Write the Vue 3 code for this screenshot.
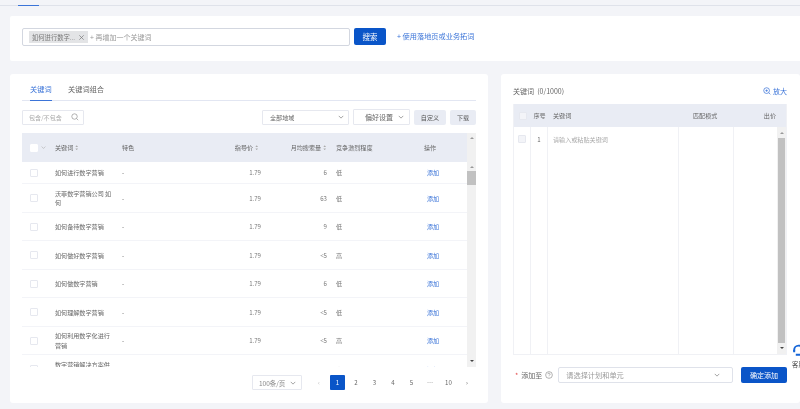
<script setup>
const rows = [
  { name: '如何进行数字营销', price: '1.79', volume: '6', level: '低' },
  { name: '沃菲数字营销公司 如何', price: '1.79', volume: '63', level: '低' },
  { name: '如何备待数字营销', price: '1.79', volume: '9', level: '低' },
  { name: '如何做好数字营销', price: '1.79', volume: '<5', level: '高' },
  { name: '如何做数字营销', price: '1.79', volume: '6', level: '低' },
  { name: '如何理解数字营销', price: '1.79', volume: '<5', level: '低' },
  { name: '如何利用数字化进行营销', price: '1.79', volume: '<5', level: '高' },
  { name: '数字营销解决方案供应商', price: '1.79', volume: '6', level: '高' }
]
const pages = ['2', '3', '4', '5', '⋯', '10']
</script>

<template>
  <div class="page">
    <div class="top">
      <div class="top__line"><span class="top__active"></span></div>
    </div>

    <section class="search">
      <div class="search__input">
        <span class="tag">如何进行数字... <svg class="tag__x" viewBox="0 0 8 8"><path d="M1.5 1.5l5 5M6.5 1.5l-5 5" /></svg></span>
        <span class="search__hint">+ 再增加一个关键词</span>
      </div>
      <button class="btn btn--primary search__btn">搜索</button>
      <a class="search__link">+ 使用落地页或业务拓词</a>
    </section>

    <div class="main">
      <section class="card left">
        <div class="tabs">
          <span class="tab tab--active">关键词</span>
          <span class="tab">关键词组合</span>
        </div>

        <div class="filters">
          <div class="field field--search">
            <span>包含/不包含</span>
            <svg class="icon-search" viewBox="0 0 10 10"><circle cx="4.4" cy="4.4" r="3.4" /><path d="M7 7l2 2" /></svg>
          </div>
          <div class="field field--region">
            <span>全部地域</span>
            <svg class="chev" viewBox="0 0 8 8"><path d="M1 2.5l3 3 3-3" /></svg>
          </div>
          <div class="field field--pref">
            <span>偏好设置</span>
            <svg class="chev" viewBox="0 0 8 8"><path d="M1 2.5l3 3 3-3" /></svg>
          </div>
          <button class="btn btn--grey btn--custom">自定义</button>
          <button class="btn btn--grey btn--down">下载</button>
        </div>

        <div class="table">
          <div class="table__main">
            <div class="grid grid--head">
              <span class="cell cell--check">
                <i class="check check--head"></i>
                <svg class="chev chev--small" viewBox="0 0 8 8"><path d="M1 2.5l3 3 3-3" /></svg>
              </span>
              <span class="cell">关键词 <svg class="sort" viewBox="0 0 5 8"><path d="M2.5 0.5L4.5 3h-4zM2.5 7.5L.5 5h4z" /></svg></span>
              <span class="cell">特色</span>
              <span class="cell cell--right cell--price">指导价 <svg class="sort" viewBox="0 0 5 8"><path d="M2.5 0.5L4.5 3h-4zM2.5 7.5L.5 5h4z" /></svg></span>
              <span class="cell cell--right cell--volume">月均搜索量 <svg class="sort" viewBox="0 0 5 8"><path d="M2.5 0.5L4.5 3h-4zM2.5 7.5L.5 5h4z" /></svg></span>
              <span class="cell cell--level">竞争激烈程度</span>
              <span class="cell">操作</span>
            </div>
            <div class="table__body">
              <div v-for="row in rows" :key="row.name" class="grid grid--row">
                <span class="cell cell--check"><i class="check"></i></span>
                <span class="cell cell--name">{{ row.name }}</span>
                <span class="cell">-</span>
                <span class="cell cell--right">{{ row.price }}</span>
                <span class="cell cell--right">{{ row.volume }}</span>
                <span class="cell cell--level">{{ row.level }}</span>
                <span class="cell cell--add">添加</span>
              </div>
            </div>
          </div>
          <div class="rail rail--left">
            <i class="arrow arrow--up"></i>
            <i class="arrow arrow--up rail__second"></i>
            <i class="thumb thumb--left"></i>
            <i class="arrow arrow--down rail__end"></i>
          </div>
        </div>

        <div class="pager">
          <div class="field field--size">
            <span>100条/页</span>
            <svg class="chev" viewBox="0 0 8 8"><path d="M1 2.5l3 3 3-3" /></svg>
          </div>
          <div class="pager__list">
            <span class="pager__item pager__item--off">‹</span>
            <span class="pager__item pager__item--on">1</span>
            <span v-for="p in pages" :key="p" class="pager__item">{{ p }}</span>
            <span class="pager__item">›</span>
          </div>
        </div>
      </section>

      <section class="card right">
        <div class="right__title">
          <span>关键词 &nbsp;(0/1000)</span>
          <a class="zoom">
            <svg viewBox="0 0 10 10"><circle cx="4.5" cy="4.5" r="3.6" /><path d="M7.2 7.2l2 2M3 4.5h3M4.5 3v3" /></svg>
            放大
          </a>
        </div>

        <div class="sheet">
          <div class="sheet__head">
            <span class="sheet__c1"><i class="check check--faint"></i></span>
            <span class="sheet__c2">序号</span>
            <span class="sheet__c3">关键词</span>
            <span class="sheet__c4">匹配模式</span>
            <span class="sheet__c5">出价</span>
          </div>
          <div class="sheet__body">
            <div class="sheet__cols">
              <span class="sheet__c1 sheet__cell"><i class="check check--faint"></i></span>
              <span class="sheet__c2 sheet__cell">1</span>
              <span class="sheet__c3 sheet__cell sheet__hint">请输入或粘贴关键词</span>
              <span class="sheet__c4 sheet__cell"></span>
              <span class="sheet__c5 sheet__cell sheet__cell--last"></span>
            </div>
            <div class="rail rail--right">
              <i class="arrow arrow--up"></i>
              <i class="thumb thumb--right"></i>
              <i class="arrow arrow--down"></i>
            </div>
          </div>
        </div>

        <div class="add">
          <span class="add__star">*</span>
          <span class="add__label">添加至</span>
          <svg class="add__help" viewBox="0 0 10 10"><circle cx="5" cy="5" r="4.2" /><path d="M3.7 4a1.3 1.3 0 1 1 2 1.1c-.5.3-.7.5-.7 1" /><path d="M5 7.2v.5" /></svg>
          <div class="field field--plan">
            <span>请选择计划和单元</span>
            <svg class="chev" viewBox="0 0 8 8"><path d="M1 2.5l3 3 3-3" /></svg>
          </div>
          <button class="btn btn--primary add__btn">确定添加</button>
        </div>
      </section>
    </div>

    <aside class="service">
      <svg viewBox="0 0 12 12"><path d="M2 7V5.5a4 4 0 0 1 8 0V7" /><path d="M2 5.5v2.2M10 5.5v2.2M3.5 10h4" /></svg>
      <span>客服</span>
    </aside>
  </div>
</template>

<style>
html,
body {
  margin: 0;
  background: #f3f4f8;
  overflow: hidden;
}
</style>

<style scoped>
.page {
  position: relative;
  width: 800px;
  height: 409px;
  overflow: hidden;
  background: #f3f4f8;
  font-family: "Noto Sans CJK SC", "Liberation Sans", sans-serif;
  font-size: 6.1px;
  color: #666;
  filter: blur(0.45px);
}

.page * {
  box-sizing: border-box;
}

.top {
  height: 16px;
  padding-top: 5px;
}

.top__line {
  height: 1px;
  background: #dfe2ea;
}

.top__active {
  display: block;
  width: 21px;
  height: 1px;
  margin-left: 18px;
  background: #3b74d8;
}

.search {
  display: flex;
  align-items: flex-start;
  height: 45px;
  margin-left: 10px;
  padding: 12px 0 0 12px;
  background: #fff;
  border-radius: 2px 0 0 2px;
}

.search__input {
  display: flex;
  align-items: center;
  width: 328px;
  height: 18px;
  padding-left: 6px;
  border: 1px solid #d3d7e0;
  border-radius: 2px;
}

.tag {
  display: flex;
  align-items: center;
  height: 12px;
  padding: 0 3px;
  background: #e3e4e6;
  font-size: 6.3px;
  color: #777;
}

.tag__x {
  width: 7px;
  height: 7px;
  margin-left: 3px;
  fill: none;
  stroke: #777;
  stroke-width: 0.8;
}

.search__hint {
  margin-left: 2px;
  font-size: 7px;
  color: #999;
}

.search__btn {
  width: 32px;
  height: 17px;
  margin-left: 4px;
  font-size: 7.5px;
}

.search__link {
  margin: 2px 0 0 11px;
  font-size: 7.2px;
  line-height: 12px;
  color: #3b74d8;
}

.btn {
  padding: 0;
  border: none;
  border-radius: 2px;
  font-family: inherit;
}

.btn--primary {
  background: #0a55c8;
  color: #fff;
}

.btn--grey {
  height: 15px;
  background: #e9ecf4;
  font-size: 6.1px;
  color: #555;
}

.btn--custom {
  width: 32px;
  margin-left: 4px;
}

.btn--down {
  width: 26px;
  margin-left: 4px;
}

.main {
  display: flex;
  gap: 13px;
  height: 329px;
  margin: 13px 0 0 10px;
}

.card {
  background: #fff;
  border-radius: 3px;
}

.left {
  width: 478px;
  padding: 0 12px;
}

.tabs {
  display: flex;
  gap: 16.5px;
  height: 27px;
  padding-left: 8px;
  border-bottom: 1px solid #e2e6f2;
}

.tab {
  height: 27px;
  font-size: 7.2px;
  line-height: 30px;
  color: #666;
}

.tab--active {
  border-bottom: 1px solid #3b74d8;
  color: #3b74d8;
}

.filters {
  display: flex;
  align-items: center;
  height: 16px;
  margin-top: 8px;
}

.field {
  display: flex;
  align-items: center;
  justify-content: space-between;
  height: 15px;
  background: #fff;
  border: 1px solid #e6e8ef;
  border-radius: 1px;
  color: #888;
}

.field--search {
  width: 62px;
  padding: 0 4px 0 6px;
  color: #aaa;
}

.icon-search {
  width: 8px;
  height: 8px;
  fill: none;
  stroke: #888;
  stroke-width: 0.8;
}

.chev {
  width: 6px;
  height: 6px;
  fill: none;
  stroke: #777;
  stroke-width: 0.9;
}

.field--region {
  width: 87px;
  margin-left: auto;
  padding: 0 4px 0 7px;
  color: #666;
}

.field--pref {
  width: 57px;
  height: 16px;
  margin-left: 4px;
  padding: 0 5px 0 11px;
  font-size: 7px;
  color: #666;
}

.table {
  display: flex;
  height: 234px;
  margin-top: 8px;
}

.table__main {
  width: 445px;
  overflow: hidden;
}

.grid {
  display: grid;
  grid-template-columns: 33px 67px 58px 81px 66px 97px 1fr;
  align-items: center;
}

.grid--head {
  height: 29px;
  background: #e9ecf4;
  color: #666;
}

.grid--row {
  height: 28.5px;
  padding-top: 1px;
  border-bottom: 1px solid #f3f4f8;
  color: #777;
}

.grid--row:first-child {
  height: 22px;
}

.cell {
  display: block;
  line-height: 9.5px;
  white-space: nowrap;
}

.cell--right {
  text-align: right;
}

.cell--price {
  padding-right: 3px;
}

.cell--volume {
  padding-right: 1px;
}

.cell--level {
  padding-left: 9px;
}

.cell--name {
  width: 58px;
  white-space: normal;
  color: #666;
}

.cell--check {
  display: flex;
  align-items: center;
  padding-left: 8px;
}

.cell--add {
  padding-left: 3px;
  color: #3b74d8;
}

.check {
  display: block;
  width: 8px;
  height: 8px;
  background: #fff;
  border: 1px solid #e6e8ef;
  border-radius: 1px;
}

.check--head {
  border-color: #fff;
}

.check--faint {
  background: #f3f4f8;
  border-color: #e6e8ef;
}

.chev--small {
  width: 5px;
  height: 5px;
  margin-left: 3px;
  stroke: #aaa;
}

.sort {
  width: 3.5px;
  height: 5.5px;
  vertical-align: -0.5px;
  fill: #aaa;
}

.table__body {
  height: 205px;
  overflow: hidden;
}

.rail {
  display: flex;
  flex-direction: column;
  align-items: center;
  background: #f1f1f1;
}

.rail--left {
  width: 9px;
  padding: 4px 0 5px;
}

.rail--right {
  width: 9px;
  padding: 5px 0;
  justify-content: space-between;
}

.rail__second {
  margin-top: 27px;
}

.rail__end {
  margin-top: auto;
}

.arrow {
  width: 0;
  height: 0;
  border-left: 2px solid transparent;
  border-right: 2px solid transparent;
}

.arrow--up {
  border-bottom: 2px solid #999;
}

.arrow--down {
  border-top: 2px solid #444;
}

.thumb {
  width: 100%;
  background: #c1c1c1;
}

.thumb--left {
  height: 14px;
  margin-top: 3px;
}

.thumb--right {
  flex: 1;
  margin: 4px 0;
  width: 7px;
}

.pager {
  display: flex;
  align-items: center;
  height: 15px;
  margin-top: 8px;
  padding-left: 230px;
}

.field--size {
  width: 50px;
  padding: 0 5px 0 6px;
  font-size: 6.5px;
}

.pager__list {
  display: flex;
  gap: 3.5px;
  margin-left: 9.5px;
}

.pager__item {
  width: 15px;
  height: 15px;
  border-radius: 1px;
  text-align: center;
  line-height: 15px;
  color: #666;
}

.pager__item--off {
  color: #bbb;
}

.pager__item--on {
  background: #0a55c8;
  color: #fff;
}

.right {
  flex: 1;
  padding: 0 13px 0 12px;
}

.right__title {
  display: flex;
  align-items: center;
  justify-content: space-between;
  height: 30px;
  padding-top: 4px;
  font-size: 7px;
  color: #666;
}

.zoom {
  display: flex;
  align-items: center;
  gap: 2px;
  color: #3b74d8;
}

.zoom svg {
  width: 8px;
  height: 8px;
  fill: none;
  stroke: #3b74d8;
  stroke-width: 0.9;
}

.sheet {
  border: 1px solid #f0f1f5;
  border-top: none;
}

.sheet__head {
  display: flex;
  align-items: center;
  height: 23px;
  background: #e9ecf4;
  color: #666;
}

.sheet__c1 {
  display: flex;
  justify-content: center;
  width: 17px;
}

.sheet__c2 {
  width: 17px;
  text-align: center;
}

.sheet__c3 {
  width: 131px;
  padding-left: 5px;
}

.sheet__c4 {
  width: 55px;
  padding-left: 14px;
}

.sheet__c5 {
  flex: 1;
  padding-right: 10px;
  text-align: right;
}

.sheet__body {
  display: flex;
  height: 227px;
}

.sheet__cols {
  display: flex;
  flex: 1;
}

.sheet__cell {
  height: 100%;
  padding-top: 8px;
  border-right: 1px solid #f0f1f5;
  line-height: 9px;
}

.sheet__cell--last {
  border-right: none;
}

.sheet__hint {
  color: #aaa;
}

.add {
  display: flex;
  align-items: center;
  height: 15px;
  margin-top: 12.5px;
  font-size: 7px;
}

.add__star {
  margin-left: 2px;
  color: #e34d4d;
}

.add__label {
  margin-left: 3px;
  color: #666;
}

.add__help {
  width: 8px;
  height: 8px;
  margin-left: 3px;
  fill: none;
  stroke: #888;
  stroke-width: 0.8;
}

.field--plan {
  flex: 1;
  height: 15.5px;
  margin-left: 5px;
  padding: 0 12px 0 7px;
  border-color: #dfe2ea;
  border-radius: 2px;
  font-size: 7.2px;
  color: #999;
}

.add__btn {
  width: 46px;
  height: 15.5px;
  margin-left: 8px;
  font-size: 7px;
}

.service {
  position: absolute;
  top: 341px;
  left: 790px;
  display: flex;
  flex-direction: column;
  align-items: flex-start;
  width: 10px;
  height: 31px;
  padding: 3px 0 0 2px;
  overflow: hidden;
  background: #fff;
  font-size: 6.5px;
  white-space: nowrap;
  color: #555;
}

.service svg {
  width: 13px;
  height: 13px;
  flex-shrink: 0;
  fill: none;
  stroke: #1666d8;
  stroke-width: 1.8;
}

.service span {
  margin-top: 2px;
}
</style>
